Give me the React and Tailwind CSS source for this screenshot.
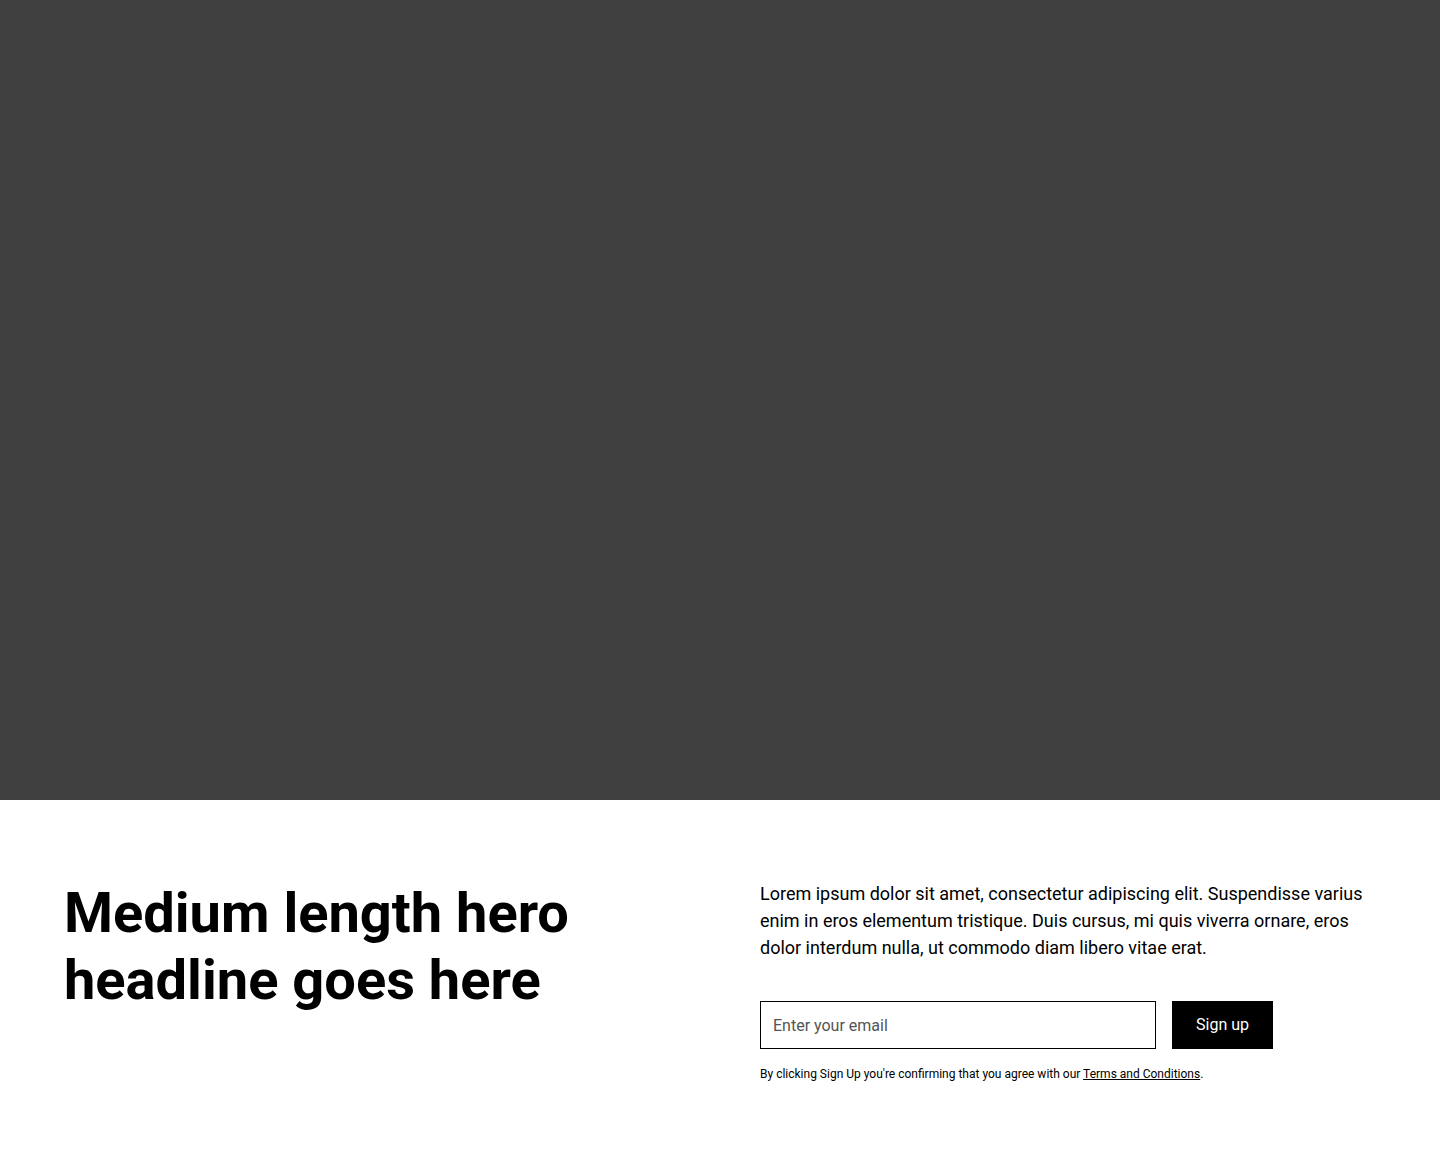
import React from "react";

function Hero() {
  return (
    <section className="bg-white">
      <div className="w-full h-[800px] bg-[#404040]" />
      <div className="px-16 py-20 grid grid-cols-2 gap-x-20">
        <h1 className="text-[56px] leading-[1.2] font-bold text-black">
          Medium length hero headline goes here
        </h1>
        <div>
          <p className="text-lg leading-[1.5] text-black">
            Lorem ipsum dolor sit amet, consectetur adipiscing elit. Suspendisse varius enim in eros
            elementum tristique. Duis cursus, mi quis viverra ornare, eros dolor interdum nulla, ut
            commodo diam libero vitae erat.
          </p>
          <form className="mt-10 flex gap-4" onSubmit={(e) => e.preventDefault()}>
            <input
              type="email"
              placeholder="Enter your email"
              className="w-[396px] h-12 px-3 border border-black text-base text-black placeholder:text-[#555] outline-none"
            />
            <button type="submit" className="h-12 px-6 bg-black text-white text-base">
              Sign up
            </button>
          </form>
          <p className="mt-4 text-xs leading-[1.5] text-black">
            By clicking Sign Up you're confirming that you agree with our{" "}
            <a href="#" className="underline">Terms and Conditions</a>.
          </p>
        </div>
      </div>
    </section>
  );
}

export default function App() {
  return (
    <div className="font-['Roboto',sans-serif] min-h-screen bg-white">
      <Hero />
    </div>
  );
}
